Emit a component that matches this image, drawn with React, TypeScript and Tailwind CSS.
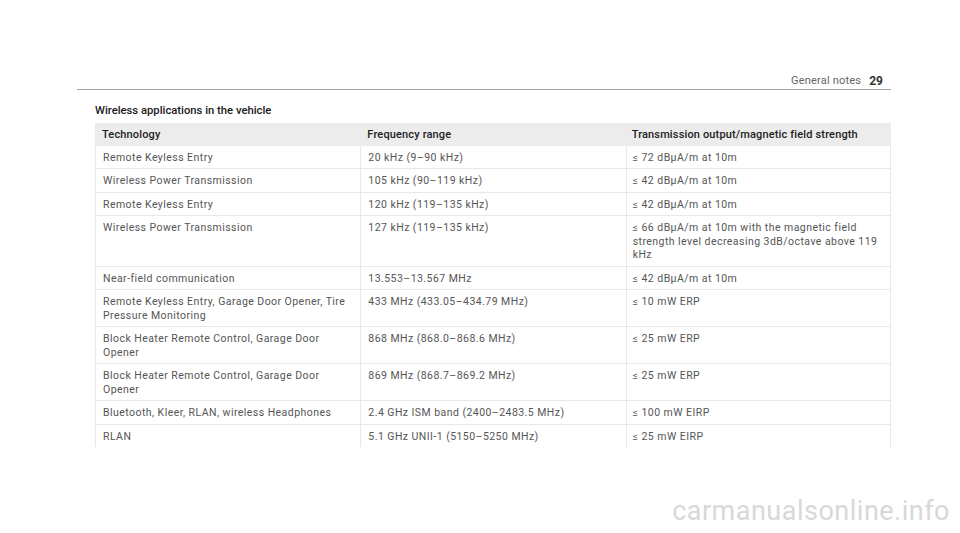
const rows: [string, string, string][] = [
  ["Remote Keyless Entry", "20 kHz (9–90 kHz)", "≤ 72 dBµA/m at 10m"],
  ["Wireless Power Transmission", "105 kHz (90–119 kHz)", "≤ 42 dBµA/m at 10m"],
  ["Remote Keyless Entry", "120 kHz (119–135 kHz)", "≤ 42 dBµA/m at 10m"],
  [
    "Wireless Power Transmission",
    "127 kHz (119–135 kHz)",
    "≤ 66 dBµA/m at 10m with the magnetic field strength level decreasing 3dB/octave above 119 kHz",
  ],
  ["Near-field communication", "13.553–13.567 MHz", "≤ 42 dBµA/m at 10m"],
  [
    "Remote Keyless Entry, Garage Door Opener, Tire Pressure Monitoring",
    "433 MHz (433.05–434.79 MHz)",
    "≤ 10 mW ERP",
  ],
  ["Block Heater Remote Control, Garage Door Opener", "868 MHz (868.0–868.6 MHz)", "≤ 25 mW ERP"],
  ["Block Heater Remote Control, Garage Door Opener", "869 MHz (868.7–869.2 MHz)", "≤ 25 mW ERP"],
  ["Bluetooth, Kleer, RLAN, wireless Headphones", "2.4 GHz ISM band (2400–2483.5 MHz)", "≤ 100 mW EIRP"],
  ["RLAN", "5.1 GHz UNII-1 (5150–5250 MHz)", "≤ 25 mW EIRP"],
];

export default function App() {
  return (
    <div className="relative h-[533px] w-[960px] bg-white font-['Roboto',sans-serif]">
      {/* Page header */}
      <div className="ml-[77px] flex w-[814px] items-end justify-end gap-[8px] border-b border-[#9eaaa6] pt-[74px] pr-[8px] pb-[1px] text-[11px] leading-[14px]">
        <span className="tracking-[0.2px] text-[#666]">General notes</span>
        <span className="text-[12px] font-bold text-[#333]">29</span>
      </div>

      <div className="ml-[95px] w-[796px]">
        <h2 className="mt-[14px] text-[11.25px] leading-[14px] font-medium text-[#1a1a1a]">
          Wireless applications in the vehicle
        </h2>

        {/* Table */}
        <div className="mt-[5px] text-[10.5px] leading-[13.5px]">
          <div className="grid grid-cols-3 bg-[#ececec] text-[11px] font-medium tracking-[0.15px] text-[#222]">
            <div className="px-[7px] pt-[5px] pb-[4px]">Technology</div>
            <div className="px-[7px] pt-[5px] pb-[4px]">Frequency range</div>
            <div className="px-[6px] pt-[5px] pb-[4px]">Transmission output/magnetic field strength</div>
          </div>
          {rows.map((r, i) => (
            <div
              key={i}
              className={`grid grid-cols-3 tracking-[0.45px] text-[#555] ${i < rows.length - 1 ? "border-b border-[#e8e8e8]" : ""}`}
            >
              <div className="border-l border-[#e8e8e8] pt-[5px] pr-[10px] pb-[4px] pl-[7px]">{r[0]}</div>
              <div className="border-l border-[#e8e8e8] px-[7px] pt-[5px] pb-[4px]">{r[1]}</div>
              <div className="border-x border-[#e8e8e8] pt-[5px] pr-[1px] pb-[4px] pl-[6px]">{r[2]}</div>
            </div>
          ))}
        </div>
      </div>

      <div className="absolute right-[10px] bottom-[6px] text-[27px] leading-[32px] tracking-[0.5px] text-[#d8d8d8]">
        carmanualsonline.info
      </div>
    </div>
  );
}
